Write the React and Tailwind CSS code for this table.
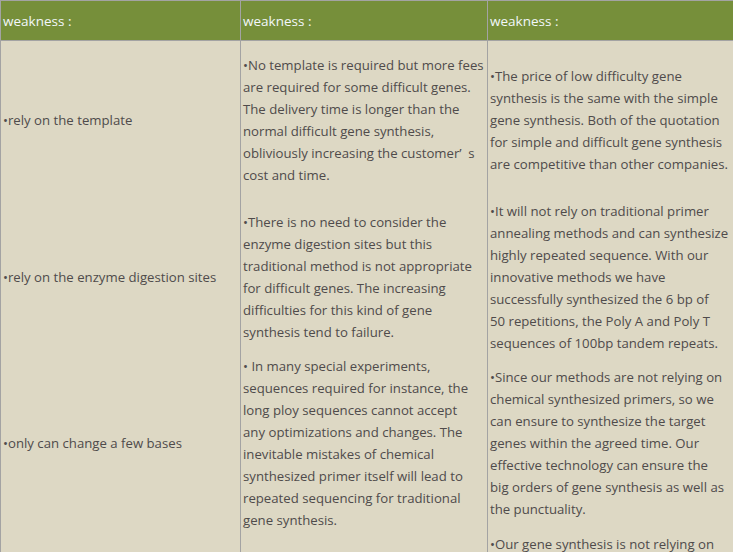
import React from 'react';

const rows = [
  {
    h: 'h-[158px]',
    a: ['•rely on the template'],
    b: [
      '•No template is required but more fees',
      'are required for some difficult genes.',
      'The delivery time is longer than the',
      'normal difficult gene synthesis,',
      'obliviously increasing the customer’\u2002s',
      'cost and time.',
    ],
    c: [
      '•The price of low difficulty gene',
      'synthesis is the same with the simple',
      'gene synthesis. Both of the quotation',
      'for simple and difficult gene synthesis',
      'are competitive than other companies.',
    ],
  },
  {
    h: 'h-[156px]',
    a: ['•rely on the enzyme digestion sites'],
    b: [
      '•There is no need to consider the',
      'enzyme digestion sites but this',
      'traditional method is not appropriate',
      'for difficult genes. The increasing',
      'difficulties for this kind of gene',
      'synthesis tend to failure.',
    ],
    c: [
      '•It will not rely on traditional primer',
      'annealing methods and can synthesize',
      'highly repeated sequence. With our',
      'innovative methods we have',
      'successfully synthesized the 6 bp of',
      '50 repetitions, the Poly A and Poly T',
      'sequences of 100bp tandem repeats.',
    ],
  },
  {
    h: 'h-[176px]',
    a: ['•only can change a few bases'],
    b: [
      '• In many special experiments,',
      'sequences required for instance, the',
      'long ploy sequences cannot accept',
      'any optimizations and changes. The',
      'inevitable mistakes of chemical',
      'synthesized primer itself will lead to',
      'repeated sequencing for traditional',
      'gene synthesis.',
    ],
    c: [
      '•Since our methods are not relying on',
      'chemical synthesized primers, so we',
      'can ensure to synthesize the target',
      'genes within the agreed time. Our',
      'effective technology can ensure the',
      'big orders of gene synthesis as well as',
      'the punctuality.',
    ],
  },
];

function Lines({ lines }) {
  return (
    <p className="whitespace-nowrap">
      {lines.map((l, i) => (
        <span key={i} className="block">{l}</span>
      ))}
    </p>
  );
}

export default function App() {
  return (
    <div className="h-[552px] w-[733px] overflow-hidden bg-[#ddd8c4] font-['Open_Sans',sans-serif] text-[13.2px] leading-[22px] text-[#4f4b4b]">
      <div className="grid grid-cols-[240px_247px_246px] border-l border-t border-[#a3a3a3]">
        {['weakness', 'weakness', 'weakness'].map((t, i) => (
          <div
            key={i}
            className={`flex h-[40px] items-center bg-[#768f3a] pl-[2px] text-[13.5px] text-[#f2f7fb] border-b border-[#a3a3a3] ${i < 2 ? 'border-r' : ''}`}
          >
            {t} :
          </div>
        ))}
        {rows.map((r, i) => (
          <React.Fragment key={i}>
            <div className={`flex ${r.h} items-center border-r border-[#a3a3a3] pl-[2px]`}>
              <Lines lines={r.a} />
            </div>
            <div className={`flex ${r.h} items-center border-r border-[#a3a3a3] pl-[2px]`}>
              <Lines lines={r.b} />
            </div>
            <div className={`flex ${r.h} items-center pl-[2px]`}>
              <Lines lines={r.c} />
            </div>
          </React.Fragment>
        ))}
        <div className="h-[60px] border-r border-[#a3a3a3]"></div>
        <div className="h-[60px] border-r border-[#a3a3a3]"></div>
        <div className="h-[60px] pl-[2px] pt-[2px]">
          <Lines lines={['•Our gene synthesis is not relying on']} />
        </div>
      </div>
    </div>
  );
}
